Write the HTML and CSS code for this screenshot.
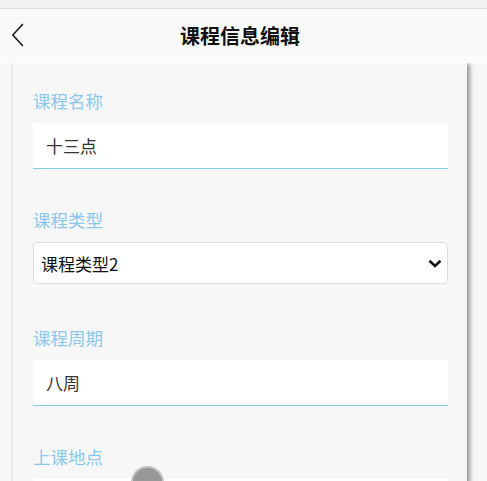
FILE: index.html
```html
<!DOCTYPE html>
<html lang="zh-CN">
<head>
<meta charset="utf-8">
<title>课程信息编辑</title>
<link rel="stylesheet" href="styles.css">
</head>
<body>
<div class="topband"></div>
<header class="header">
  <span class="back">
    <svg width="14" height="24" viewBox="0 0 14 24"><path d="M11.5 1.5 L1.8 12 L11.5 22.5" fill="none" stroke="#1f1f1f" stroke-width="1.7" stroke-linecap="round" stroke-linejoin="round"/></svg>
  </span>
  <h1 class="title">课程信息编辑</h1>
</header>
<main class="card">
  <div class="field">
    <label class="label">课程名称</label>
    <input class="input" type="text" value="十三点">
  </div>
  <div class="field field-select">
    <label class="label">课程类型</label>
    <div class="select-wrap">
      <select class="select">
        <option>课程类型2</option>
      </select>
      <svg class="arrow" width="14" height="9" viewBox="0 0 14 9"><path d="M1.5 1.8 L7 7 L12.5 1.8" fill="none" stroke="#111" stroke-width="2.6" stroke-linejoin="miter"/></svg>
    </div>
  </div>
  <div class="field">
    <label class="label">课程周期</label>
    <input class="input" type="text" value="八周">
  </div>
  <div class="field">
    <label class="label">上课地点</label>
    <input class="input" type="text" value="">
  </div>
</main>
<div class="touch"></div>
</body>
</html>
```
FILE: styles.css
```css
html, body {
  margin: 0;
  padding: 0;
  height: 100%;
  overflow: hidden;
}
body {
  background: #f6f6f6;
  font-family: "Noto Sans CJK SC", "Liberation Sans", sans-serif;
  position: relative;
}
.topband {
  height: 8px;
  background: #f1f1f1;
  border-bottom: 1px solid #e2e2e2;
}
.header {
  height: 54px;
  background: #fafafa;
  display: flex;
  align-items: center;
  justify-content: center;
  position: relative;
}
.back {
  position: absolute;
  left: 11px;
  top: 14px;
  display: flex;
}
.title {
  margin: 0 7px 0 0;
  font-size: 20px;
  font-weight: 700;
  color: #111;
  line-height: 24px;
}
.card {
  margin: 0 20px 0 13px;
  background: #f7f7f7;
  padding: 26px 19px 0 20px;
  box-shadow: 3px 1px 4px rgba(0,0,0,0.38), -1px 0 2px rgba(0,0,0,0.06);
  min-height: 600px;
}
.field {
  display: flex;
  flex-direction: column;
  margin-bottom: 39px;
}
.field-select {
  margin-bottom: 42px;
}
.label {
  font-size: 17.5px;
  line-height: 24px;
  height: 24px;
  color: #8cc7ee;
  margin-bottom: 10px;
}
.input {
  box-sizing: border-box;
  height: 46px;
  border: none;
  border-bottom: 1px solid #84cfdf;
  background: #fff;
  padding: 0 12px 0 13px;
  font-family: inherit;
  font-size: 17px;
  color: #333;
  outline: none;
}
.select-wrap {
  position: relative;
}
.select {
  -webkit-appearance: none;
  appearance: none;
  box-sizing: border-box;
  width: 100%;
  height: 42px;
  border: 1px solid #dedede;
  border-radius: 4px;
  background: #fff;
  padding: 0 30px 0 7px;
  font-family: inherit;
  font-size: 17px;
  color: #111;
  outline: none;
}
.arrow {
  position: absolute;
  right: 6px;
  top: 17px;
}
.touch {
  position: absolute;
  left: 133px;
  top: 468px;
  width: 29px;
  height: 29px;
  border-radius: 50%;
  background: #989898;
  box-shadow: 0 0 0 2px rgba(170,170,170,0.7);
}
```
